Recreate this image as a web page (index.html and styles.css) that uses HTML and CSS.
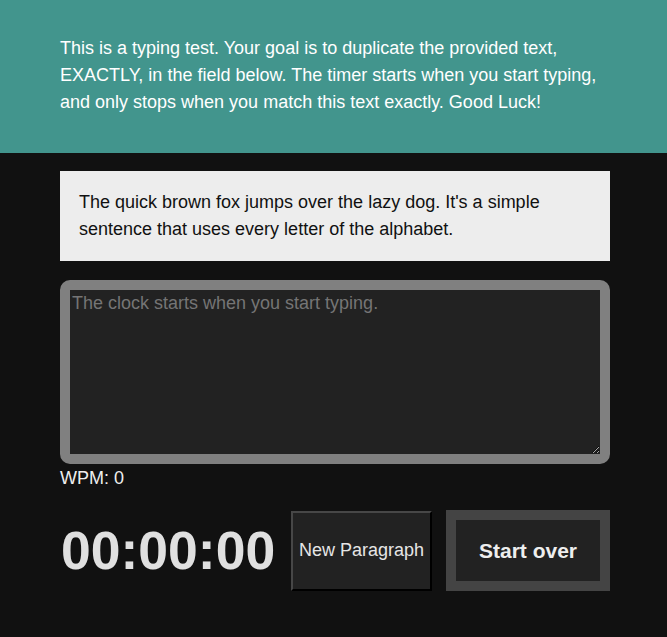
FILE: index.html
```html
<!DOCTYPE html>
<html>
<head>
<meta charset="utf-8">
<link rel="stylesheet" href="styles.css">
</head>
<body>
<header class="intro">
  <p class="intro-text">This is a typing test. Your goal is to duplicate the provided text, EXACTLY, in the field below. The timer starts when you start typing, and only stops when you match this text exactly. Good Luck!</p>
</header>
<main class="test">
  <div class="sample">
    <p class="sample-text">The quick brown fox jumps over the lazy dog. It's a simple sentence that uses every letter of the alphabet.</p>
  </div>
  <textarea class="entry" placeholder="The clock starts when you start typing."></textarea>
  <div class="wpm">WPM: 0</div>
  <div class="controls">
    <div class="timer">00:00:00</div>
    <button class="btn-new">New Paragraph</button>
    <button class="btn-reset">Start over</button>
  </div>
</main>
</body>
</html>
```
FILE: styles.css
```css
html, body {
  margin: 0;
  padding: 0;
  background: #111111;
  font-family: "Liberation Sans", Arial, sans-serif;
}
.intro {
  background: #42958d;
  padding: 35px 60px 37px;
}
.intro-text {
  margin: 0;
  color: #ffffff;
  font-size: 18px;
  line-height: 27px;
}
.test {
  width: 550px;
  margin: 18px auto 0 60px;
  display: flex;
  flex-direction: column;
}
.sample {
  background: #ededed;
  padding: 18px 19px;
}
.sample-text {
  margin: 0;
  color: #111;
  font-size: 18px;
  line-height: 27px;
}
.entry {
  margin-top: 19px;
  box-sizing: border-box;
  width: 550px;
  height: 184px;
  border: 10px solid #808080;
  border-radius: 10px;
  background: #222222;
  color: #ddd;
  font-family: "Liberation Sans", Arial, sans-serif;
  font-size: 18px;
  padding: 3px 2px 2px;
  outline: none;
  display: block;
}
.entry::placeholder {
  color: #757575;
}
.wpm {
  color: #eeeeee;
  font-size: 18px;
  line-height: 20px;
  margin-top: 4px;
}
.controls {
  display: flex;
  align-items: center;
  margin-top: 22px;
}
.timer {
  color: #e0e0e0;
  font-weight: bold;
  font-size: 53.5px;
  width: 231px;
  padding-left: 1px;
  box-sizing: border-box;
}
.btn-new {
  width: 141px;
  height: 80px;
  background: #222222;
  color: #e6e6e6;
  font-family: "Liberation Sans", Arial, sans-serif;
  font-size: 18px;
  border: 2px solid;
  border-color: #474747 #000 #000 #474747;
  padding: 0;
}
.btn-reset {
  margin-left: 14px;
  width: 164px;
  height: 81px;
  background: #222222;
  color: #eeeeee;
  font-family: "Liberation Sans", Arial, sans-serif;
  font-size: 21px;
  font-weight: bold;
  border: 10px solid #444444;
  padding: 0;
}
```
